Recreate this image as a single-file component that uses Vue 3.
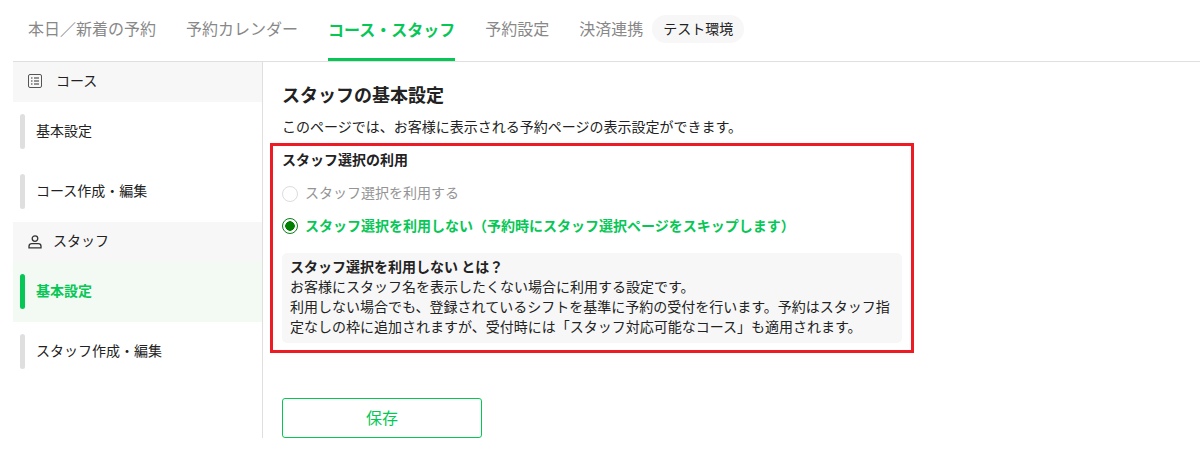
<template>
  <div class="page">
    <header class="tabs">
      <a
        v-for="tab in tabs"
        :key="tab.label"
        class="tab"
        :class="{ active: tab.active }"
      >{{ tab.label }}</a>
      <span class="env-badge">テスト環境</span>
    </header>

    <div class="body">
      <aside class="sidebar">
        <template v-for="group in groups" :key="group.label">
          <div class="group-title" :class="group.key">
            <svg v-if="group.key === 'course'" class="icon" viewBox="0 0 14 14" fill="none">
              <rect x="0.5" y="0.5" width="13" height="13" rx="1.5" stroke="#555" />
              <path d="M3 4h1.5M6 4h5M3 7h1.5M6 7h5M3 10h1.5M6 10h5" stroke="#333" stroke-width="1.2" />
            </svg>
            <svg v-else class="icon" viewBox="0 0 14 14" fill="none">
              <circle cx="7" cy="3.6" r="2.8" stroke="#333" stroke-width="1.3" />
              <path d="M1 12.9v-1.7c0-1.5 1.2-2.6 2.7-2.6h6.6c1.500 0 2.700 1.100 2.700 2.600v1.700z" stroke="#333" stroke-width="1.300" />
            </svg>
            <span>{{ group.label }}</span>
          </div>
          <div
            v-for="item in group.items"
            :key="item.label"
            class="side-item"
            :class="{ active: item.active }"
          >
            <i class="side-bar"></i>
            <span>{{ item.label }}</span>
          </div>
        </template>
      </aside>

      <main class="content">
        <h1>スタッフの基本設定</h1>
        <p class="lead">このページでは、お客様に表示される予約ページの表示設定ができます。</p>

        <section class="setting">
          <h2>スタッフ選択の利用</h2>
          <label class="radio disabled">
            <input type="radio" name="staff" disabled />
            <span>スタッフ選択を利用する</span>
          </label>
          <label class="radio selected">
            <input type="radio" name="staff" checked />
            <span>スタッフ選択を利用しない（予約時にスタッフ選択ページをスキップします）</span>
          </label>
          <div class="note">
            <strong>スタッフ選択を利用しない とは？</strong>
            <p>お客様にスタッフ名を表示したくない場合に利用する設定です。</p>
            <p>利用しない場合でも、登録されているシフトを基準に予約の受付を行います。予約はスタッフ指定なしの枠に追加されますが、受付時には「スタッフ対応可能なコース」も適用されます。</p>
          </div>
        </section>

        <button class="save" type="button">保存</button>
      </main>
    </div>
  </div>
</template>

<script setup>
const tabs = [
  { label: '本日／新着の予約' },
  { label: '予約カレンダー' },
  { label: 'コース・スタッフ', active: true },
  { label: '予約設定' },
  { label: '決済連携' }
]

const groups = [
  {
    key: 'course',
    label: 'コース',
    items: [{ label: '基本設定' }, { label: 'コース作成・編集' }]
  },
  {
    key: 'staff',
    label: 'スタッフ',
    items: [{ label: '基本設定', active: true }, { label: 'スタッフ作成・編集' }]
  }
]
</script>

<style>
html,
body {
  background: #fff;
}
</style>

<style scoped>
.page {
  height: 451px;
  overflow: hidden;
  font-family: "Noto Sans CJK JP", "Noto Sans", sans-serif;
  color: #222;
  font-size: 14px;
}

.tabs {
  display: flex;
  align-items: center;
  gap: 30px;
  height: 61px;
  margin-left: 13px;
  padding-left: 15px;
  border-bottom: 1px solid #dfdfdf;
}

.tab {
  display: flex;
  align-items: center;
  height: 58px;
  padding-bottom: 2px;
  box-sizing: border-box;
  align-self: flex-start;
  font-size: 16px;
  color: #888;
}

.tab.active {
  height: 61px;
  font-weight: 700;
  color: #06c755;
  border-bottom: 3px solid #06c755;
  padding-bottom: 0;
}

.env-badge {
  height: 28px;
  margin: -3px 0 0 -21px;
  padding: 0 11px;
  border-radius: 14px;
  background: #f7f7f7;
  line-height: 27px;
  color: #222;
}

.body {
  display: flex;
  margin-left: 13px;
}

.sidebar {
  width: 249px;
  height: 376px;
  border-right: 1px solid #dfdfdf;
  flex-shrink: 0;
}

.group-title {
  display: flex;
  align-items: center;
  height: 40px;
  padding-left: 15px;
  background: #f7f7f7;
}

.group-title span {
  padding-bottom: 4px;
}

.group-title.course {
  gap: 14px;
}

.group-title.course .icon {
  margin-bottom: 2px;
}

.group-title.staff {
  gap: 11px;
}

.icon {
  width: 14px;
  height: 14px;
  flex-shrink: 0;
}

.side-item {
  display: flex;
  align-items: center;
  gap: 11px;
  height: 60px;
  padding-left: 7px;
}

.side-item span {
  padding-bottom: 4px;
}

.side-item.active {
  background: #f3faf4;
  color: #06c755;
  font-weight: 700;
}

.side-bar {
  width: 5px;
  height: 35px;
  margin-bottom: 1px;
  border-radius: 3px;
  background: #dfdfdf;
}

.side-item.active .side-bar {
  background: #06c755;
}

.content {
  padding: 19px 0 0 19px;
}

h1 {
  margin: 0;
  font-size: 18px;
  line-height: 26px;
  font-weight: 700;
}

.lead {
  margin: 9px 0 0;
  line-height: 20px;
}

.setting {
  width: 620px;
  height: 201px;
  margin: 7px 0 0 -12px;
  padding: 3px 9px 0;
  border: 3px solid #ed1c24;
}

h2 {
  margin: 0;
  font-size: 14px;
  line-height: 20px;
  font-weight: 700;
}

.radio {
  display: flex;
  align-items: center;
  gap: 7px;
  height: 20px;
  margin-top: 13px;
}

.radio.selected {
  color: #06c755;
  font-weight: 700;
}

.radio.disabled {
  color: #949494;
}

.radio input {
  appearance: none;
  box-sizing: border-box;
  width: 16px;
  height: 16px;
  margin: 4px 0 0;
  border: 1px solid #dcdcdc;
  border-radius: 50%;
  background: #fff;
}

.radio.selected input {
  margin-top: 2px;
  border-color: #0a7d1c;
  background: radial-gradient(circle, #008000 0 4.5px, #fff 5px);
}

.note {
  margin-top: 18px;
  padding: 3px 8px 7px;
  border-radius: 5px;
  background: #f7f7f7;
  line-height: 20px;
}

.note strong,
.note p {
  display: block;
  margin: 0;
}

.save {
  display: block;
  width: 200px;
  height: 40px;
  margin-top: 45px;
  padding: 0 0 2px;
  border: 1px solid #06c755;
  border-radius: 3px;
  background: #fff;
  color: #06c755;
  font-family: inherit;
  font-size: 16px;
}
</style>
